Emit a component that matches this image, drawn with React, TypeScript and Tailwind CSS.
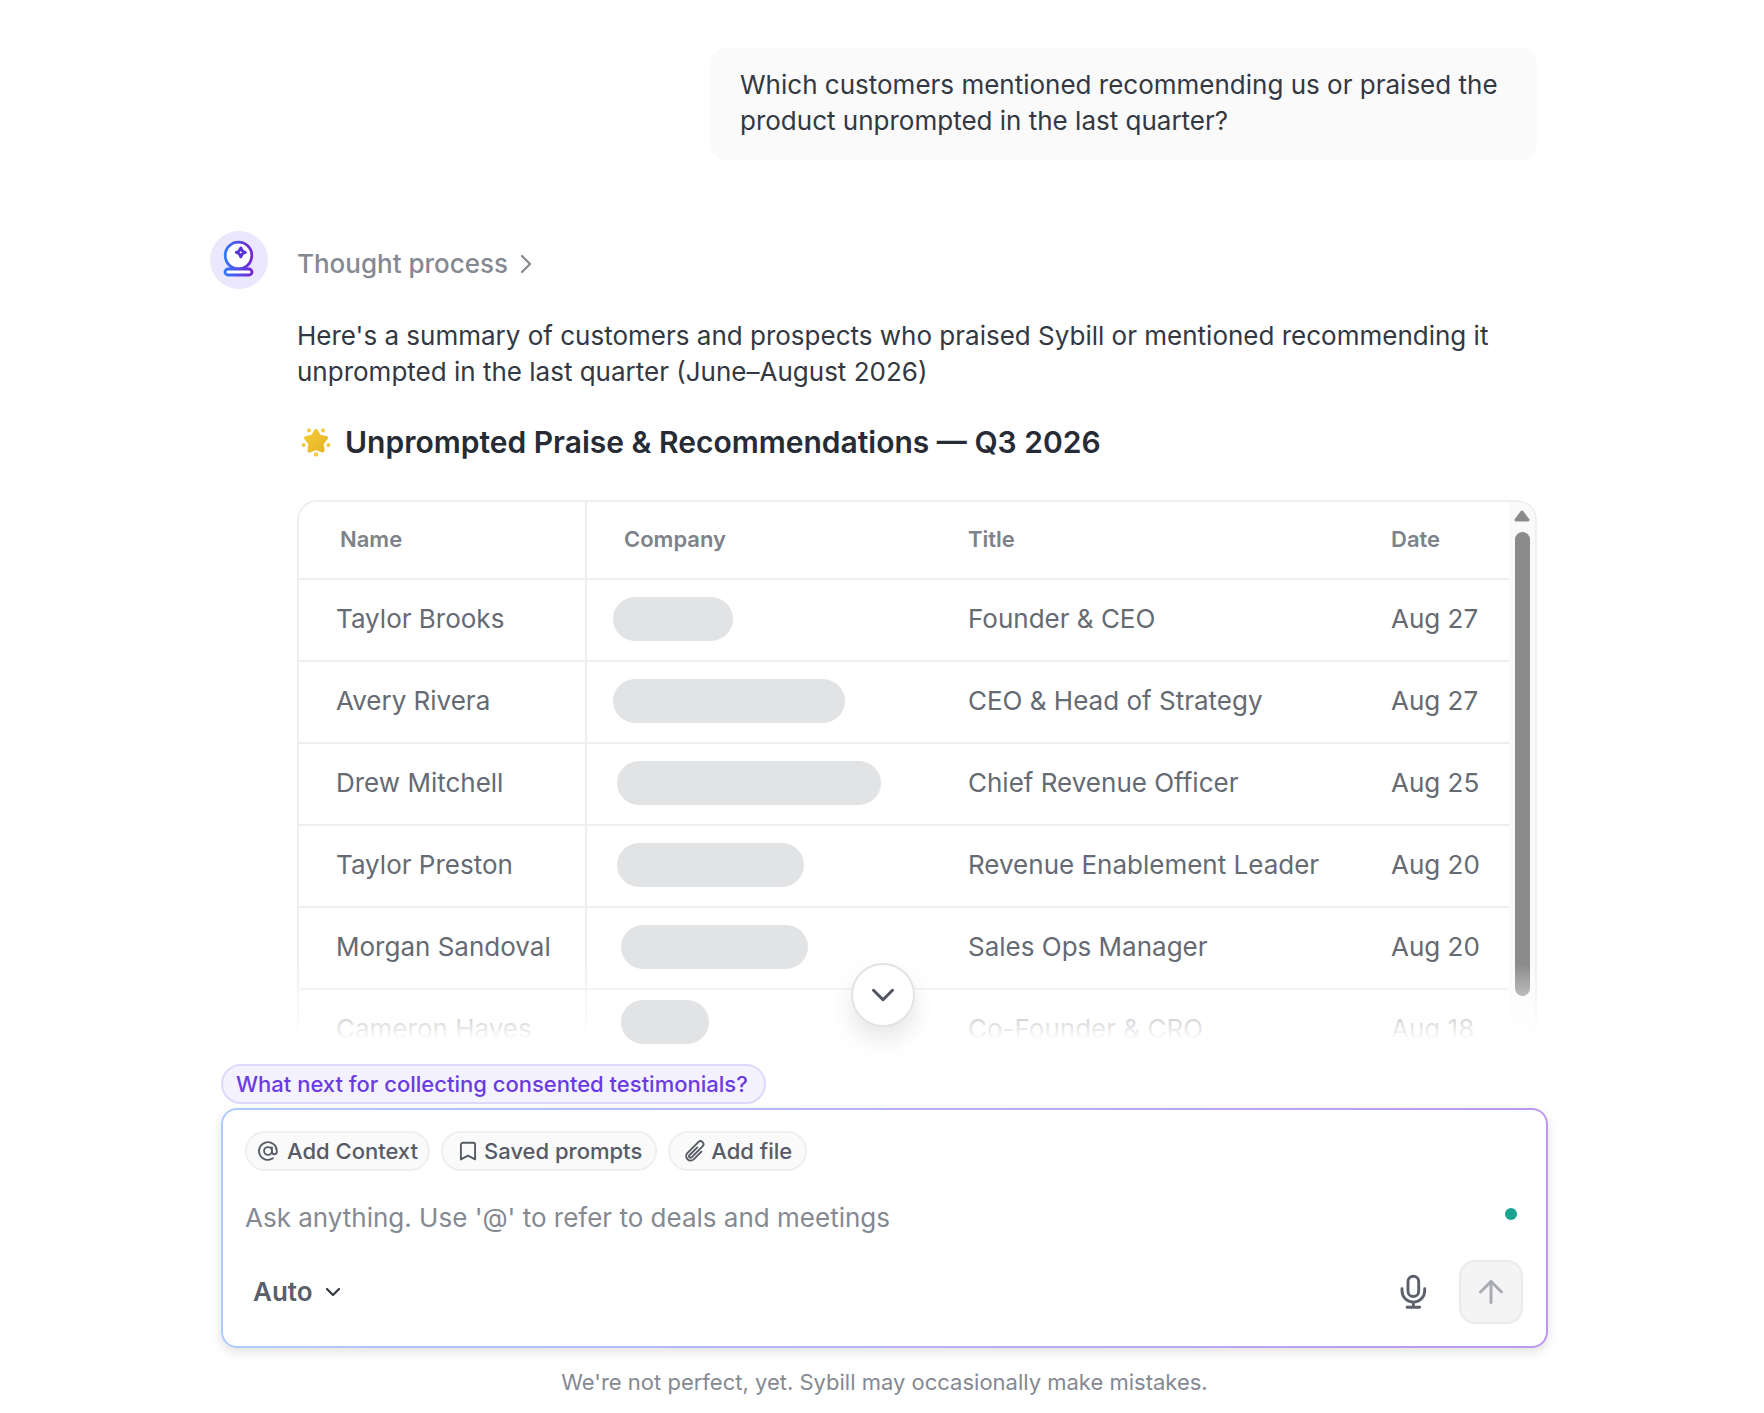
import React, { useState } from 'react'
import { ArrowUp, ChevronDown, ChevronRight } from 'lucide-react'

interface PraiseRow {
  name: string
  companyWidth: string
  title: string
  date: string
}

const rows: PraiseRow[] = [
  { name: 'Taylor Brooks', companyWidth: 'w-[120px]', title: 'Founder & CEO', date: 'Aug 27' },
  { name: 'Avery Rivera', companyWidth: 'w-[232px]', title: 'CEO & Head of Strategy', date: 'Aug 27' },
  { name: 'Drew Mitchell', companyWidth: 'w-[264px] ml-1', title: 'Chief Revenue Officer', date: 'Aug 25' },
  { name: 'Taylor Preston', companyWidth: 'w-[187px] ml-1', title: 'Revenue Enablement Leader', date: 'Aug 20' },
  { name: 'Morgan Sandoval', companyWidth: 'w-[187px] ml-2', title: 'Sales Ops Manager', date: 'Aug 20' },
  { name: 'Cameron Hayes', companyWidth: 'w-[88px] ml-2', title: 'Co-Founder & CRO', date: 'Aug 18' },
]

const CrystalBall = () => (
  <svg viewBox="0.5 0.5 36 40" className="w-9 h-10" fill="none" aria-hidden="true">
    <defs>
      <linearGradient id="ball" x1="3" y1="0" x2="33" y2="0" gradientUnits="userSpaceOnUse">
        <stop offset="0" stopColor="#2f7bff" />
        <stop offset="1" stopColor="#7a1fd0" />
      </linearGradient>
    </defs>
    <circle cx="18" cy="16" r="13.3" fill="#fff" stroke="url(#ball)" strokeWidth="2.8" />
    <rect x="4.5" y="29.5" width="27" height="6" rx="3" fill="#fff" stroke="url(#ball)" strokeWidth="2.8" />
    <path
      d="M20.3 8.4 Q21.2 12 24.8 12.9 Q21.2 13.8 20.3 17.4 Q19.4 13.8 15.8 12.9 Q19.4 12 20.3 8.4Z"
      stroke="#5b34d6"
      strokeWidth="2.9"
      strokeLinejoin="round"
    />
  </svg>
)

const GlowingStar = () => (
  <svg viewBox="0 0 30 30" className="w-[30px] h-[30px]" aria-hidden="true">
    <defs>
      <linearGradient id="star" x1="0" y1="0" x2="1" y2="1">
        <stop offset="0" stopColor="#f3cb3a" />
        <stop offset="1" stopColor="#e6b422" />
      </linearGradient>
    </defs>
    <path
      d="M15 4 L18.2 9.6 L25 11 L20.6 16.4 L21.6 23.6 L15 21 L8.4 23.6 L9.4 16.4 L5 11 L11.8 9.6Z"
      fill="url(#star)"
      stroke="url(#star)"
      strokeWidth="4"
      strokeLinejoin="round"
    />
    <g fill="#f5c73a">
      <circle cx="8" cy="3.4" r="2" />
      <circle cx="22" cy="3.4" r="2" />
      <circle cx="2.6" cy="18" r="2" />
      <circle cx="27.4" cy="18" r="2" />
      <circle cx="15" cy="27.4" r="2.2" />
    </g>
  </svg>
)

const AtIcon = () => (
  <svg viewBox="0 0 24 24" className="size-[22px]" fill="none" stroke="currentColor" strokeWidth="2" strokeLinecap="round" aria-hidden="true">
    <circle cx="12" cy="12" r="4.3" />
    <path d="M16.3 8v5.4a2.7 2.7 0 0 0 5.3 0V12a9.7 9.7 0 1 0-4.2 8" />
  </svg>
)

const BookmarkIcon = () => (
  <svg viewBox="0 0 24 24" className="size-6" fill="none" stroke="currentColor" strokeWidth="1.9" strokeLinejoin="round" aria-hidden="true">
    <path d="M4.9 5.8a2 2 0 0 1 2-2h10.2a2 2 0 0 1 2 2V20.4L12 16.6l-7.1 3.8Z" />
  </svg>
)

const ClipIcon = () => (
  <svg viewBox="0 0 24 24" className="size-6" fill="none" stroke="currentColor" strokeWidth="1.9" strokeLinecap="round" strokeLinejoin="round" aria-hidden="true">
    <path d="m18.4 12.7-7.7 7.7a4.5 4.5 0 0 1-6.4-6.3L15.3 3.1a3 3 0 1 1 4.2 4.3L8.6 18.3M14.3 8.4l-7.9 7.8a1.5 1.5 0 0 0 2.2 2.1" />
  </svg>
)

const MicIcon = () => (
  <svg viewBox="0 0 27 36" className="h-9 w-[27px]" fill="none" stroke="currentColor" strokeWidth="2.9" strokeLinecap="round" aria-hidden="true">
    <rect x="8" y="2.3" width="10.7" height="20.2" rx="5.3" />
    <path d="M2 14.8v2a11.35 11.35 0 0 0 22.7 0v-2M13.35 28.2v5.1M7 33.3h12.7" />
  </svg>
)

const chipClass =
  'flex h-10 items-center rounded-full border-2 border-[#efeff0] bg-[#fafafa] pb-px text-[22px] leading-none font-medium text-[#565b65]'

export default function App() {
  const [prompt, setPrompt] = useState('')

  const renderTable = () => (
    <div className="relative">
      <div className="flex h-[544px] overflow-hidden rounded-t-[20px] border-2 border-b-0 border-[#efeff0]">
        <table className="w-full table-fixed self-start border-collapse text-left leading-7 text-[#656a73]">
          <thead>
            <tr className="h-[77px] border-b-2 border-[#efeff0] text-[22px] text-[#7d828b]">
              <th className="w-[287px] border-r-2 border-[#efeff0] pb-[2px] pl-[41px] font-semibold">Name</th>
              <th className="w-[346px] pb-[2px] pl-[37px] font-semibold">Company</th>
              <th className="pb-[2px] pl-9 font-semibold">Title</th>
              <th className="w-[154px] pb-[2px] pl-9 font-semibold">Date</th>
            </tr>
          </thead>
          <tbody className="text-[26px]">
            {rows.map(row => (
              <tr key={row.name} className="group h-[82px] border-b-2 border-[#efeff0]">
                <td className="border-r-2 border-[#efeff0] pb-[3px] pl-[37px]">{row.name}</td>
                <td className="pb-[3px] pl-[26px] group-last:pt-[10px] group-last:align-top">
                  <div className={`relative z-20 h-11 rounded-full bg-[#e2e3e5] ${row.companyWidth}`} />
                </td>
                <td className="pb-[3px] pl-9">{row.title}</td>
                <td className="pb-[3px] pl-9">{row.date}</td>
              </tr>
            ))}
          </tbody>
        </table>

        {/* Scrollbar */}
        <div className="flex w-[26px] shrink-0 flex-col items-center gap-[10px] bg-[#fafafa] pt-2">
          <svg viewBox="0 0 16 12" className="h-3 w-4" aria-hidden="true">
            <path d="M8 2 L14 10 H2Z" fill="#8b8b8b" stroke="#8b8b8b" strokeWidth="3" strokeLinejoin="round" />
          </svg>
          <div className="h-[464px] w-[15px] rounded-full bg-[#8b8b8b]" />
        </div>
      </div>
      {/* Fade the rows out towards the composer */}
      <div className="absolute inset-x-0 bottom-0 z-10 h-20 bg-linear-to-b from-white/0 to-white to-95%" />
    </div>
  )

  return (
    <main className="min-h-screen bg-white pt-12 pr-[216px] pl-[210px] font-['Inter',sans-serif] text-[26px] leading-9 text-[#333842]">
      <section className="pr-[11px]">
        <p className="ml-auto h-28 max-w-[827px] rounded-2xl bg-[#fafafa] px-[30px] pt-[19px]">
          Which customers mentioned recommending us or praised the product unprompted in the last quarter?
        </p>

        <div className="mt-[71px] flex gap-[29px]">
          <div className="flex size-[58px] shrink-0 items-center justify-center rounded-full bg-[#ebe8fe]">
            <CrystalBall />
          </div>

          <div className="min-w-0 flex-1">
            <button type="button" className="mt-[15px] flex items-center gap-0.5 font-medium text-[#858992]">
              Thought process
              <ChevronRight className="size-8" strokeWidth={1.7} />
            </button>
            <p className="mt-9">
              Here's a summary of customers and prospects who praised Sybill or mentioned recommending it
              unprompted in the last quarter (June–August 2026)
            </p>
            <h2 className="mt-[34px] mb-10 flex items-center gap-[14px] pl-1 text-[30px] font-semibold text-[#262b35]">
              <GlowingStar />
              Unprompted Praise & Recommendations — Q3 2026
            </h2>

            {renderTable()}
          </div>
        </div>
      </section>

      <section className="relative ml-[11px] pt-5">
        {/* Centred on the messages column, which is a little left of the composer */}
        <div className="absolute inset-x-0 -top-[81px] z-30 flex justify-center pr-[3px]">
          <button
            type="button"
            aria-label="Scroll to bottom"
            className="flex size-16 items-center justify-center rounded-full border-2 border-[#e2e3e5] bg-white text-[#50555f] shadow-[0_12px_24px_rgba(0,0,0,0.1)]"
          >
            <ChevronDown className="size-[38px] shrink-0" strokeWidth={1.9} />
          </button>
        </div>

        <button
          type="button"
          className="flex h-10 items-center rounded-full border-2 border-[#dfd9fd] bg-[#f4f2ff] pr-4 pl-[13px] text-[22px] leading-none font-medium text-[#6a3be2]"
        >
          What next for collecting consented testimonials?
        </button>

        {/* Composer */}
        <form
          className="mt-1 rounded-2xl bg-linear-to-r from-[#aecbff] to-[#bb98ee] p-[2px] shadow-[0_4px_12px_rgba(0,0,0,0.12)]"
          onSubmit={e => e.preventDefault()}
        >
          <div className="rounded-[14px] bg-white pt-[21px] pr-[23px] pb-[22px] pl-[22px]">
            <div className="flex gap-[11px]">
              <button type="button" className={`${chipClass} gap-2 px-[10px]`}>
                <AtIcon />
                Add Context
              </button>
              <button type="button" className={`${chipClass} gap-1 px-[13px]`}>
                <BookmarkIcon />
                Saved prompts
              </button>
              <button type="button" className={`${chipClass} gap-1 px-[13px]`}>
                <ClipIcon />
                Add file
              </button>
            </div>

            <div className="mt-[29px] flex pr-1.5">
              <input
                type="text"
                aria-label="Ask anything"
                value={prompt}
                onChange={e => setPrompt(e.target.value)}
                placeholder="Ask anything. Use '@' to refer to deals and meetings"
                className="min-w-0 flex-1 outline-none placeholder:text-[#858992]"
              />
              <span className="mt-2 size-3 rounded-full bg-[#17a592]" />
            </div>

            <div className="mt-6 flex items-center">
              <div className="relative flex items-center">
                <select aria-label="Mode" className="appearance-none bg-transparent pr-10 pl-2 font-semibold text-[#5a5f69]">
                  <option>Auto</option>
                </select>
                <ChevronDown className="pointer-events-none absolute right-2 size-6" strokeWidth={2.2} />
              </div>
              <button type="button" aria-label="Dictate" className="ml-auto text-[#5b606a]">
                <MicIcon />
              </button>
              <button
                type="submit"
                aria-label="Send"
                className="ml-8 flex size-16 items-center justify-center rounded-2xl border-2 border-[#eaeaeb] bg-[#f4f4f4] text-[#a9acb2]"
              >
                <ArrowUp className="size-9" strokeWidth={2} />
              </button>
            </div>
          </div>
        </form>

        <p className="mt-4 text-center text-[22px] text-[#858992]">
          We're not perfect, yet. Sybill may occasionally make mistakes.
        </p>
      </section>
    </main>
  )
}
